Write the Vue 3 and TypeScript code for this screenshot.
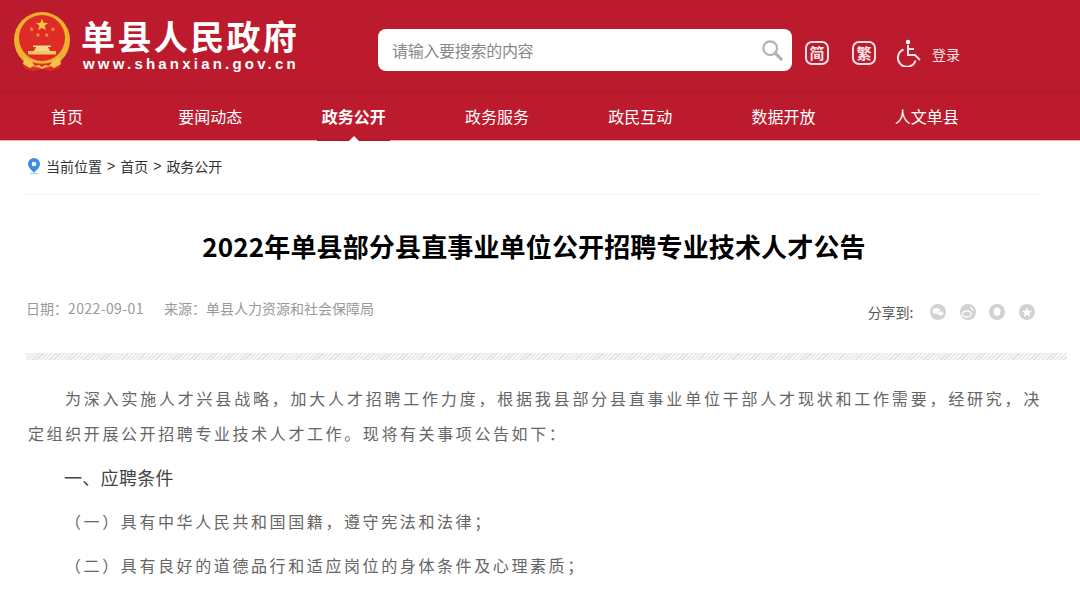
<script setup lang="ts">
const navItems = ["首页", "要闻动态", "政务公开", "政务服务", "政民互动", "数据开放", "人文单县"];
const activeNav = "政务公开";

const paragraphs = [
  { text: "为深入实施人才兴县战略\uFF0C加大人才招聘工作力度\uFF0C根据我县部分县直事业单位干部人才现状和工作需要\uFF0C经研究\uFF0C决定组织开展公开招聘专业技术人才工作。现将有关事项公告如下\uFF1A", heading: false },
  { text: "一、应聘条件", heading: true },
  { text: "\uFF08一\uFF09具有中华人民共和国国籍\uFF0C遵守宪法和法律\uFF1B", heading: false },
  { text: "\uFF08二\uFF09具有良好的道德品行和适应岗位的身体条件及心理素质\uFF1B", heading: false },
];

// 小五角星的位置,围着国徽中间的大星
const smallStars = [
  { x: 18.7, y: 17.3 },
  { x: 25, y: 23 },
  { x: 33.7, y: 23 },
  { x: 40, y: 17.3 },
];

function starPoints(cx: number, cy: number, r: number): string {
  const pts: string[] = [];
  for (let i = 0; i < 10; i++) {
    const rad = i % 2 === 0 ? r : r * 0.42;
    const a = -Math.PI / 2 + (i * Math.PI) / 5;
    pts.push(`${(cx + rad * Math.cos(a)).toFixed(2)},${(cy + rad * Math.sin(a)).toFixed(2)}`);
  }
  return pts.join(" ");
}
</script>

<template>
  <div class="page">
    <header class="top">
      <div class="logo">
        <svg class="emblem" width="58" height="60" viewBox="0 0 58 60">
          <path d="M8 44l3 12 9 3 9-2 9 2 9-3 3-12z" fill="#dd2f26" />
          <circle cx="29" cy="28" r="28" fill="#eeb02f" />
          <circle cx="29" cy="26" r="23" fill="#de2b25" />
          <polygon :points="starPoints(29, 13, 6.5)" fill="#f6c83d" />
          <polygon v-for="(s, i) in smallStars" :key="i" :points="starPoints(s.x, s.y, 2.5)" fill="#eda33a" />
          <path d="M21 39l2-4h12l2 4z" fill="#f6d98a" />
          <path d="M20 33.500h18v1.500H20z" fill="#f6d98a" />
          <path d="M15 39h28v3.500H15z" fill="#f3c65c" />
          <path d="M12 45c4 4 10 6 17 6s13-2 17-6l2 7-7 4-5-3-7 4-7-4-5 3-7-4z" fill="#f5c349" />
          <path d="M19 50c3 1 7 1.500 10 1.500s7-.5 10-1.500l-3 4-4-1-3 2-3-2-4 1z" fill="#dd2f26" />
        </svg>
        <div class="logo-text">
          <div class="logo-name">单县人民政府</div>
          <div class="logo-url">www.shanxian.gov.cn</div>
        </div>
      </div>

      <div class="search">
        <span class="search-hint">请输入要搜索的内容</span>
        <svg width="22" height="22" viewBox="0 0 24 24" fill="none" stroke="#b3b3b3">
          <circle cx="10" cy="10" r="7.5" stroke-width="2.4" />
          <path d="M15.5 15.500L22 22" stroke-width="3.400" stroke-linecap="round" />
        </svg>
      </div>

      <span class="lang">简</span>
      <span class="lang lang-trad">繁</span>

      <svg class="wheelchair" width="26" height="28" viewBox="0 0 26 28" fill="none" stroke="#fbe4e6" stroke-width="2">
        <circle cx="12" cy="3" r="2.200" fill="#fff" stroke="none" />
        <path d="M12 6v10h7l5 5" />
        <path d="M12 10h6" />
        <path d="M7.500 10.500a9 9 0 1 0 12 11" />
      </svg>
      <span class="login">登录</span>
    </header>

    <nav class="nav">
      <a v-for="item in navItems" :key="item" class="nav-item" :class="{ active: item === activeNav }">
        {{ item }}
      </a>
    </nav>

    <main class="content">
      <div class="crumbs">
        <svg width="14" height="17" viewBox="0 0 14 17">
          <path d="M7 0a6 6 0 0 1 6 6c0 3.500-3.500 6.500-6 8.500C4.500 12.500 1 9.500 1 6a6 6 0 0 1 6-6z" fill="#3b8ee8" />
          <circle cx="7" cy="6" r="2.300" fill="#fff" />
          <path d="M3 15.500h8" stroke="#a9cdf3" stroke-width="1.200" />
        </svg>
        <span>当前位置</span><i>&gt;</i><span>首页</span><i>&gt;</i><span>政务公开</span>
      </div>

      <h1 class="title">2022年单县部分县直事业单位公开招聘专业技术人才公告</h1>

      <div class="meta">
        <div class="source">
          <span>日期&#xFF1A;<b class="date">2022-09-01</b></span>
          <span>来源&#xFF1A;单县人力资源和社会保障局</span>
        </div>
        <div class="share">
          <span class="share-label">分享到:</span>
          <svg class="share-icon" viewBox="0 0 16 16">
            <circle cx="8" cy="8" r="8" fill="#d2d2d2" />
            <ellipse cx="6.500" cy="7" rx="4" ry="3" fill="#fff" />
            <ellipse cx="10.500" cy="9.500" rx="3.200" ry="2.400" fill="#fff" stroke="#d2d2d2" stroke-width=".7" />
          </svg>
          <svg class="share-icon" viewBox="0 0 16 16">
            <circle cx="8" cy="8" r="8" fill="#d2d2d2" />
            <ellipse cx="6.800" cy="10" rx="4.500" ry="3" fill="none" stroke="#fff" stroke-width="1.300" />
            <path d="M10 3.500c2 0 3 1.500 2.700 3.500" fill="none" stroke="#fff" stroke-width="1.200" />
          </svg>
          <svg class="share-icon" viewBox="0 0 16 16">
            <circle cx="8" cy="8" r="8" fill="#d2d2d2" />
            <path d="M8 3.500c2.300 0 3.500 1.800 3.500 4 0 2.500-1.500 4.500-3.500 4.500S4.500 10 4.500 7.500c0-2.200 1.200-4 3.500-4z" fill="#fff" />
          </svg>
          <svg class="share-icon" viewBox="0 0 16 16">
            <circle cx="8" cy="8" r="8" fill="#d2d2d2" />
            <polygon :points="starPoints(8, 8.500, 5.500)" fill="#fff" />
          </svg>
        </div>
      </div>

      <div class="stripe"></div>

      <article class="article">
        <p v-for="p in paragraphs" :key="p.text" :class="{ heading: p.heading }">{{ p.text }}</p>
      </article>
    </main>
  </div>
</template>

<style>
html,
body {
  margin: 0;
  background: #fff;
  overflow: hidden;
}
</style>

<style scoped>
.page {
  width: 1080px;
  height: 591px;
  overflow: hidden;
  font-family: "Noto Sans CJK SC", "Noto Sans", sans-serif;
}

.top {
  height: 91px;
  background: #bb1b2d;
  border-bottom: 1px solid #a91a2a;
  display: flex;
  align-items: flex-start;
  padding-left: 13px;
}

.logo {
  display: flex;
  align-items: flex-start;
  width: 365px;
  padding-top: 12px;
}

.emblem {
  flex: none;
  margin-right: 10px;
}

.logo-text {
  color: #fff;
  padding-top: 4px;
}

.logo-name {
  font-size: 34px;
  font-weight: 700;
  letter-spacing: 2.4px;
  line-height: 40px;
}

.logo-url {
  font-family: "Liberation Sans", sans-serif;
  font-size: 15px;
  font-weight: 700;
  letter-spacing: 3.2px;
  line-height: 16px;
  padding-left: 2px;
}

.search {
  width: 414px;
  height: 42px;
  margin-top: 29px;
  box-sizing: border-box;
  background: #fff;
  border-radius: 8px;
  display: flex;
  align-items: center;
  justify-content: space-between;
  padding: 0 9px 0 14px;
}

.search-hint {
  font-size: 16px;
  letter-spacing: -0.3px;
  color: #888;
}

.lang {
  width: 24px;
  height: 24px;
  box-sizing: border-box;
  border: 2px solid #fbdfe2;
  border-radius: 7px;
  color: #fbe4e6;
  font-size: 15px;
  font-weight: 700;
  line-height: 20px;
  text-align: center;
  margin: 41px 0 0 13px;
}

.lang-trad {
  margin-left: 23px;
}

.wheelchair {
  margin: 39px 0 0 20px;
}

.login {
  margin: 44px 0 0 10px;
  color: #fbe4e6;
  font-size: 14px;
  line-height: 20px;
}

.nav {
  height: 48px;
  background: #bb1b2d;
  border-bottom: 1px solid #eeb0b6;
  display: grid;
  grid-template-columns: repeat(7, 143.3px);
  margin-left: -4.6px;
  width: 1084.6px;
}

.nav-item {
  position: relative;
  color: #fff;
  font-size: 16px;
  line-height: 49px;
  text-align: center;
}

.nav-item.active {
  font-weight: 700;
}

.nav-item.active::before {
  content: "";
  position: absolute;
  left: 35px;
  right: 35px;
  bottom: 0;
  height: 2px;
  background: #b01a2b;
}

.nav-item.active::after {
  content: "";
  position: absolute;
  left: 50%;
  bottom: 0;
  margin-left: -5px;
  border: 5px solid transparent;
  border-top: 0;
  border-bottom-color: #fff;
}

.content {
  padding-left: 26px;
}

.crumbs {
  width: 1016px;
  height: 54px;
  box-sizing: border-box;
  padding: 0 0 3px 1px;
  border-bottom: 1px dotted #e6e6e6;
  display: flex;
  align-items: center;
  gap: 5px;
  color: #333;
  font-size: 14px;
}

.crumbs i {
  font-style: normal;
  font-family: "Liberation Sans", sans-serif;
}

.title {
  margin: 0;
  width: 1016px;
  padding-top: 32px;
  color: #000;
  font-size: 26px;
  font-weight: 700;
  line-height: 38px;
  letter-spacing: 0.15px;
  text-align: center;
}

.meta {
  display: flex;
  justify-content: space-between;
  width: 1009px;
  margin-top: 32px;
}

.source {
  display: flex;
  gap: 20px;
  color: #999;
  font-size: 14px;
  line-height: 22px;
}

.date {
  font-weight: 400;
  letter-spacing: 0.4px;
}

.share {
  display: flex;
  align-items: center;
  padding-top: 4px;
  color: #555;
  font-size: 14px;
  line-height: 22px;
}

.share-label {
  margin-right: 16.5px;
}

.share-icon {
  width: 16px;
  height: 16px;
  margin-right: 13.67px;
}

.share-icon:last-child {
  margin-right: 0;
}

.stripe {
  width: 1041px;
  height: 7px;
  margin-top: 30px;
  background: repeating-linear-gradient(135deg, #e2e2e2 0 1px, #f5f5f5 1px 3px);
}

.article {
  width: 1014px;
  padding-top: 21px;
  padding-left: 2px;
  color: #666;
  font-size: 16px;
  line-height: 35px;
  letter-spacing: 2.6px;
}

.article p {
  margin: 0 0 9px;
  text-indent: 37px;
  text-align: justify;
}

.article .heading {
  color: #444;
  font-size: 18px;
  letter-spacing: 0.3px;
  text-indent: 36px;
}
</style>
